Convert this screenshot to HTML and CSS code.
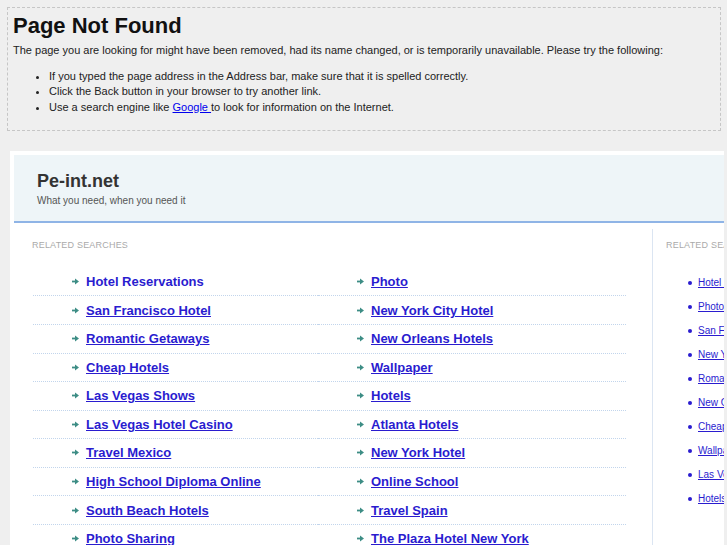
FILE: index.html
```html
<!DOCTYPE html>
<html>
<head>
<meta charset="utf-8">
<title>Page Not Found</title>
<link rel="stylesheet" href="styles.css">
</head>
<body>
<div class="notfound">
  <h1 class="nf-title">Page Not Found</h1>
  <p class="nf-text">The page you are looking for might have been removed, had its name changed, or is temporarily unavailable. Please try the following:</p>
  <ul class="nf-list">
    <li>If you typed the page address in the Address bar, make sure that it is spelled correctly.</li>
    <li>Click the Back button in your browser to try another link.</li>
    <li>Use a search engine like <a href="#" class="nf-link">Google </a> to look for information on the Internet.</li>
  </ul>
</div>
<div class="frame">
  <div class="site">
    <div class="header">
      <div class="brand">Pe-int.net</div>
      <div class="tagline">What you need, when you need it</div>
    </div>
    <div class="content">
      <div class="main">
        <div class="label">RELATED SEARCHES</div>
        <ul class="links">
          <li><svg class="arrow" viewBox="0 0 7 7"><rect x="0" y="2.6" width="4" height="1.8"/><path d="M3 0.6 L7 3.5 L3 6.4 Z"/></svg><a href="#" class="plain">Hotel Reservations</a></li>
          <li><svg class="arrow" viewBox="0 0 7 7"><rect x="0" y="2.6" width="4" height="1.8"/><path d="M3 0.6 L7 3.5 L3 6.4 Z"/></svg><a href="#">Photo</a></li>
          <li><svg class="arrow" viewBox="0 0 7 7"><rect x="0" y="2.6" width="4" height="1.8"/><path d="M3 0.6 L7 3.5 L3 6.4 Z"/></svg><a href="#">San Francisco Hotel</a></li>
          <li><svg class="arrow" viewBox="0 0 7 7"><rect x="0" y="2.6" width="4" height="1.8"/><path d="M3 0.6 L7 3.5 L3 6.4 Z"/></svg><a href="#">New York City Hotel</a></li>
          <li><svg class="arrow" viewBox="0 0 7 7"><rect x="0" y="2.6" width="4" height="1.8"/><path d="M3 0.6 L7 3.5 L3 6.4 Z"/></svg><a href="#">Romantic Getaways</a></li>
          <li><svg class="arrow" viewBox="0 0 7 7"><rect x="0" y="2.6" width="4" height="1.8"/><path d="M3 0.6 L7 3.5 L3 6.4 Z"/></svg><a href="#">New Orleans Hotels</a></li>
          <li><svg class="arrow" viewBox="0 0 7 7"><rect x="0" y="2.6" width="4" height="1.8"/><path d="M3 0.6 L7 3.5 L3 6.4 Z"/></svg><a href="#">Cheap Hotels</a></li>
          <li><svg class="arrow" viewBox="0 0 7 7"><rect x="0" y="2.6" width="4" height="1.8"/><path d="M3 0.6 L7 3.5 L3 6.4 Z"/></svg><a href="#">Wallpaper</a></li>
          <li><svg class="arrow" viewBox="0 0 7 7"><rect x="0" y="2.6" width="4" height="1.8"/><path d="M3 0.6 L7 3.5 L3 6.4 Z"/></svg><a href="#">Las Vegas Shows</a></li>
          <li><svg class="arrow" viewBox="0 0 7 7"><rect x="0" y="2.6" width="4" height="1.8"/><path d="M3 0.6 L7 3.5 L3 6.4 Z"/></svg><a href="#">Hotels</a></li>
          <li><svg class="arrow" viewBox="0 0 7 7"><rect x="0" y="2.6" width="4" height="1.8"/><path d="M3 0.6 L7 3.5 L3 6.4 Z"/></svg><a href="#">Las Vegas Hotel Casino</a></li>
          <li><svg class="arrow" viewBox="0 0 7 7"><rect x="0" y="2.6" width="4" height="1.8"/><path d="M3 0.6 L7 3.5 L3 6.4 Z"/></svg><a href="#">Atlanta Hotels</a></li>
          <li><svg class="arrow" viewBox="0 0 7 7"><rect x="0" y="2.6" width="4" height="1.8"/><path d="M3 0.6 L7 3.5 L3 6.4 Z"/></svg><a href="#">Travel Mexico</a></li>
          <li><svg class="arrow" viewBox="0 0 7 7"><rect x="0" y="2.6" width="4" height="1.8"/><path d="M3 0.6 L7 3.5 L3 6.4 Z"/></svg><a href="#">New York Hotel</a></li>
          <li><svg class="arrow" viewBox="0 0 7 7"><rect x="0" y="2.6" width="4" height="1.8"/><path d="M3 0.6 L7 3.5 L3 6.4 Z"/></svg><a href="#">High School Diploma Online</a></li>
          <li><svg class="arrow" viewBox="0 0 7 7"><rect x="0" y="2.6" width="4" height="1.8"/><path d="M3 0.6 L7 3.5 L3 6.4 Z"/></svg><a href="#">Online School</a></li>
          <li><svg class="arrow" viewBox="0 0 7 7"><rect x="0" y="2.6" width="4" height="1.8"/><path d="M3 0.6 L7 3.5 L3 6.4 Z"/></svg><a href="#">South Beach Hotels</a></li>
          <li><svg class="arrow" viewBox="0 0 7 7"><rect x="0" y="2.6" width="4" height="1.8"/><path d="M3 0.6 L7 3.5 L3 6.4 Z"/></svg><a href="#">Travel Spain</a></li>
          <li><svg class="arrow" viewBox="0 0 7 7"><rect x="0" y="2.6" width="4" height="1.8"/><path d="M3 0.6 L7 3.5 L3 6.4 Z"/></svg><a href="#">Photo Sharing</a></li>
          <li><svg class="arrow" viewBox="0 0 7 7"><rect x="0" y="2.6" width="4" height="1.8"/><path d="M3 0.6 L7 3.5 L3 6.4 Z"/></svg><a href="#">The Plaza Hotel New York</a></li>
        </ul>
      </div>
      <div class="side">
        <div class="label">RELATED SEARCHES</div>
        <ul class="sidelinks">
          <li><span class="dot"></span><a href="#">Hotel Reservations</a></li>
          <li><span class="dot"></span><a href="#">Photo</a></li>
          <li><span class="dot"></span><a href="#">San Francisco Hotel</a></li>
          <li><span class="dot"></span><a href="#">New York City Hotel</a></li>
          <li><span class="dot"></span><a href="#">Romantic Getaways</a></li>
          <li><span class="dot"></span><a href="#">New Orleans Hotels</a></li>
          <li><span class="dot"></span><a href="#">Cheap Hotels</a></li>
          <li><span class="dot"></span><a href="#">Wallpaper</a></li>
          <li><span class="dot"></span><a href="#">Las Vegas Shows</a></li>
          <li><span class="dot"></span><a href="#">Hotels</a></li>
        </ul>
      </div>
    </div>
  </div>
</div>
</body>
</html>
```
FILE: styles.css
```css
html, body {
  margin: 0;
  padding: 0;
  overflow: hidden;
}
body {
  background: #efefef;
  font-family: "Liberation Sans", Arial, sans-serif;
  color: #222;
  width: 727px;
  height: 545px;
}
.notfound {
  margin: 7px 6px 0 7px;
  border: 1px dashed #c6c6c6;
  padding: 4px 5px 15px 5px;
}
.nf-title {
  margin: 0;
  font-size: 22px;
  line-height: 27px;
  font-weight: bold;
  color: #111;
}
.nf-text {
  margin: 4px 0 0 0;
  font-size: 11px;
  line-height: 14px;
}
.nf-list {
  margin: 12px 0 0 0;
  padding-left: 36px;
  font-size: 11px;
  line-height: 15.3px;
}
.nf-link {
  color: #0000ee;
}
.frame {
  margin: 20px 0 0 10px;
  width: 714px;
  height: 420px;
  background: #fff;
  padding: 4px 0 0 4px;
  box-sizing: border-box;
  overflow: hidden;
}
.site {
  width: 950px;
}
.header {
  height: 68px;
  box-sizing: border-box;
  background: #eef5f8;
  border-bottom: 2px solid #8fb4e6;
  padding: 15px 0 0 23px;
}
.brand {
  font-size: 18px;
  line-height: 22px;
  font-weight: bold;
  color: #333;
}
.tagline {
  margin-top: 2px;
  font-size: 10px;
  line-height: 13px;
  color: #555;
}
.content {
  display: flex;
}
.main {
  width: 639px;
  box-sizing: border-box;
  border-right: 1px solid #dbe5f2;
  margin-top: 6px;
  padding: 11px 0 0 18px;
  height: 400px;
}
.label {
  font-size: 9px;
  line-height: 11px;
  color: #aaa;
  letter-spacing: 0.2px;
}
.links {
  list-style: none;
  margin: 17px 0 0 1px;
  padding: 0;
  display: grid;
  grid-template-columns: 285px 308px;
}
.links li {
  height: 28.55px;
  box-sizing: border-box;
  border-bottom: 1px dotted #c2d5ec;
  display: flex;
  align-items: center;
  padding-left: 39px;
  font-size: 13px;
  font-weight: bold;
}
.arrow {
  width: 7px;
  height: 7px;
  fill: #3d8d85;
  margin-right: 7px;
  flex: none;
}
.links a {
  color: #2a1ccf;
}
.links a.plain {
  text-decoration: none;
}
.side {
  margin-top: 6px;
  padding: 11px 0 0 13px;
  width: 280px;
}
.sidelinks {
  list-style: none;
  margin: 20px 0 0 0;
  padding: 0 0 0 22px;
}
.sidelinks li {
  height: 24px;
  display: flex;
  align-items: center;
  font-size: 10px;
}
.dot {
  width: 4px;
  height: 4px;
  border-radius: 50%;
  background: #2a1ccf;
  margin-right: 6px;
  flex: none;
}
.sidelinks a {
  color: #2a1ccf;
}
```
